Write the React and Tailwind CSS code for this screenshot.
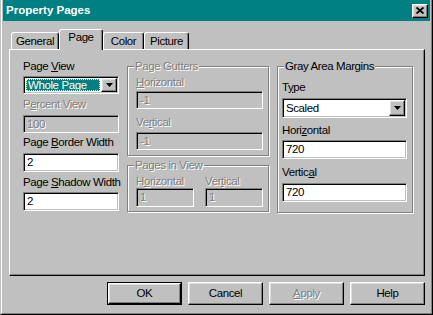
import React from "react";

const dis = "text-[#808080] [text-shadow:1px_1px_0_#fff]";
const sunken =
  "border border-t-[#808080] border-l-[#808080] border-b-white border-r-white shadow-[inset_1px_1px_0_#000,inset_-1px_-1px_0_#c0c0c0]";
const raised =
  "border border-t-white border-l-white border-b-black border-r-black shadow-[inset_-1px_-1px_0_#808080,inset_1px_1px_0_#dfdfdf]";

const Label = ({ children, disabled, className = "" }) => (
  <div className={`h-[13px] leading-[13px] whitespace-nowrap ${disabled ? dis : ""} ${className}`}>
    {children}
  </div>
);

const Field = ({ value, disabled, className = "" }) => (
  <div
    className={`${sunken} ${
      disabled ? "bg-[#c0c0c0] " + dis : "bg-white text-black"
    } flex items-center pl-[3px] leading-[13px] ${className}`}
  >
    {value}
  </div>
);

const Arrow = () => (
  <svg width="7" height="4" viewBox="0 0 7 4">
    <polygon points="0,0 7,0 3.5,4" fill="#000" />
  </svg>
);

const DropButton = ({ className = "" }) => (
  <div className={`${raised} bg-[#c0c0c0] w-[16px] h-full flex items-center justify-center ${className}`}>
    <Arrow />
  </div>
);

const Group = ({ title, disabled, className = "", children }) => (
  <div
    className={`relative border border-[#808080] shadow-[inset_1px_1px_0_#fff,1px_1px_0_#fff] ${className}`}
  >
    <div
      className={`absolute -top-[7px] left-[6px] px-[1px] bg-[#c0c0c0] h-[13px] leading-[13px] whitespace-nowrap ${
        disabled ? dis : ""
      }`}
    >
      {title}
    </div>
    {children}
  </div>
);

const Tab = ({ label, active, width }) => (
  <div
    className={`${width} flex justify-center border-t border-l border-r border-t-white border-l-white border-r-black rounded-t-[3px] shadow-[inset_-1px_0_0_#808080] leading-[13px] ${
      active ? "h-[21px] -mb-[1px] relative z-10 bg-[#c0c0c0] pt-[1px]" : "h-[17px] pt-[2px]"
    }`}
  >
    {label}
  </div>
);

const Button = ({ children, disabled, isDefault }) => {
  const inner = (
    <div
      className={`${raised} h-full w-full flex items-center justify-center leading-[13px] ${
        disabled ? dis : ""
      }`}
    >
      {children}
    </div>
  );
  return isDefault ? (
    <div className="w-[75px] h-[23px] border border-black">{inner}</div>
  ) : (
    <div className="w-[75px] h-[23px]">{inner}</div>
  );
};

export default function App() {
  return (
    <div className="w-[433px] h-[315px] bg-[#c0c0c0] border-l border-r border-b border-l-[#c0c0c0] border-r-black border-b-black font-['Liberation_Sans',Arial,sans-serif] text-[11.5px] tracking-[-0.4px] text-black select-none">
      <div className="h-full flex flex-col border-l border-r border-b border-l-white border-r-[#808080] border-b-[#808080] px-[1px]">
        {/* title bar */}
        <div className="h-[21px] bg-[#008080] flex items-center justify-between pl-[3px] pr-[2px]">
          <span className="text-white font-bold text-[11.5px] tracking-normal">Property Pages</span>
          <div className={`${raised} bg-[#c0c0c0] w-[16px] h-[14px] flex items-center justify-center`}>
            <svg width="8" height="7" viewBox="0 0 8 7">
              <path d="M0.5 0.5 L7.5 6.5 M7.5 0.5 L0.5 6.5" stroke="#000" strokeWidth="1.8" />
            </svg>
          </div>
        </div>

        {/* tabs */}
        <div className="mt-[8px] h-[20px] pl-[8px] flex items-end">
          <Tab label="General" width="w-[48px]" />
          <Tab label="Page" width="w-[44px]" active />
          <Tab label="Color" width="w-[41px]" />
          <Tab label="Picture" width="w-[45px]" />
        </div>

        {/* panel */}
        <div className="ml-[6px] w-[416px] h-[227px] border-t border-l border-t-white border-l-white border-b border-r border-b-black border-r-black shadow-[inset_-1px_-1px_0_#808080] flex items-start pl-[13px] pt-[10px]">
          {/* left column */}
          <div className="w-[96px] flex flex-col">
            <Label>
              Page <u className="underline-offset-1">V</u>iew
            </Label>
            <div className={`${sunken} bg-white mt-[3px] h-[18px] p-[1px] flex`}>
              <div className="flex-1 m-[1px] bg-[#008080] border border-dotted border-[#ffff80] text-white flex items-center overflow-hidden whitespace-nowrap leading-[12px] pl-[1px]">
                Whole Page
              </div>
              <DropButton />
            </div>
            <Label disabled className="mt-[4px]">
              P<u className="underline-offset-1">e</u>rcent View
            </Label>
            <Field value="100" disabled className="mt-[4px] h-[18px]" />
            <Label className="mt-[3px]">
              Page <u className="underline-offset-1">B</u>order Width
            </Label>
            <Field value="2" className="mt-[4px] h-[19px]" />
            <Label className="mt-[4px]">
              Page <u className="underline-offset-1">S</u>hadow Width
            </Label>
            <Field value="2" className="mt-[3px] h-[19px]" />
          </div>

          {/* middle column */}
          <div className="ml-[8px] mt-[6px] w-[142px] flex flex-col">
            <Group title="Page Gutters" disabled className="pt-[9px] pl-[8px] pr-[5px] pb-[5px]">
              <Label disabled>
                <u className="underline-offset-1">H</u>orizontal
              </Label>
              <Field value="-1" disabled className="mt-[2px] h-[18px]" />
              <Label disabled className="mt-[7px]">
                Ve<u className="underline-offset-1">r</u>tical
              </Label>
              <Field value="-1" disabled className="mt-[3px] h-[18px]" />
            </Group>
            <Group title="Pages in View" disabled className="mt-[9px] pt-[9px] pl-[8px] pr-[5px] pb-[4px]">
              <div className="flex gap-[11px]">
                <div className="w-[58px]">
                  <Label disabled>
                    H<u className="underline-offset-1">o</u>rizontal
                  </Label>
                  <Field value="1" disabled className="h-[19px]" />
                </div>
                <div className="w-[58px]">
                  <Label disabled>
                    Ver<u className="underline-offset-1">t</u>ical
                  </Label>
                  <Field value="1" disabled className="h-[19px]" />
                </div>
              </div>
            </Group>
          </div>

          {/* right column */}
          <div className="ml-[8px] mt-[6px] w-[136px]">
            <Group title="Gray Area Margins" className="pt-[14px] pl-[4px] pr-[5px] pb-[10px]">
              <Label>
                T<u className="underline-offset-1">y</u>pe
              </Label>
              <div className={`${sunken} bg-white mt-[4px] h-[20px] p-[1px] flex`}>
                <div className="flex-1 flex items-center pl-[2px] leading-[13px]">Scaled</div>
                <DropButton />
              </div>
              <Label className="mt-[6px]">
                Hori<u className="underline-offset-1">z</u>ontal
              </Label>
              <Field value="720" className="mt-[3px] h-[19px]" />
              <Label className="mt-[7px]">
                Vertic<u className="underline-offset-1">a</u>l
              </Label>
              <Field value="720" className="mt-[4px] h-[19px]" />
            </Group>
          </div>
        </div>

        {/* buttons */}
        <div className="ml-[6px] w-[416px] mt-[6px] flex justify-end gap-[6px]">
          <Button isDefault>OK</Button>
          <Button>Cancel</Button>
          <Button disabled>
            <u className="underline-offset-1">A</u>pply
          </Button>
          <Button>Help</Button>
        </div>
      </div>
    </div>
  );
}
